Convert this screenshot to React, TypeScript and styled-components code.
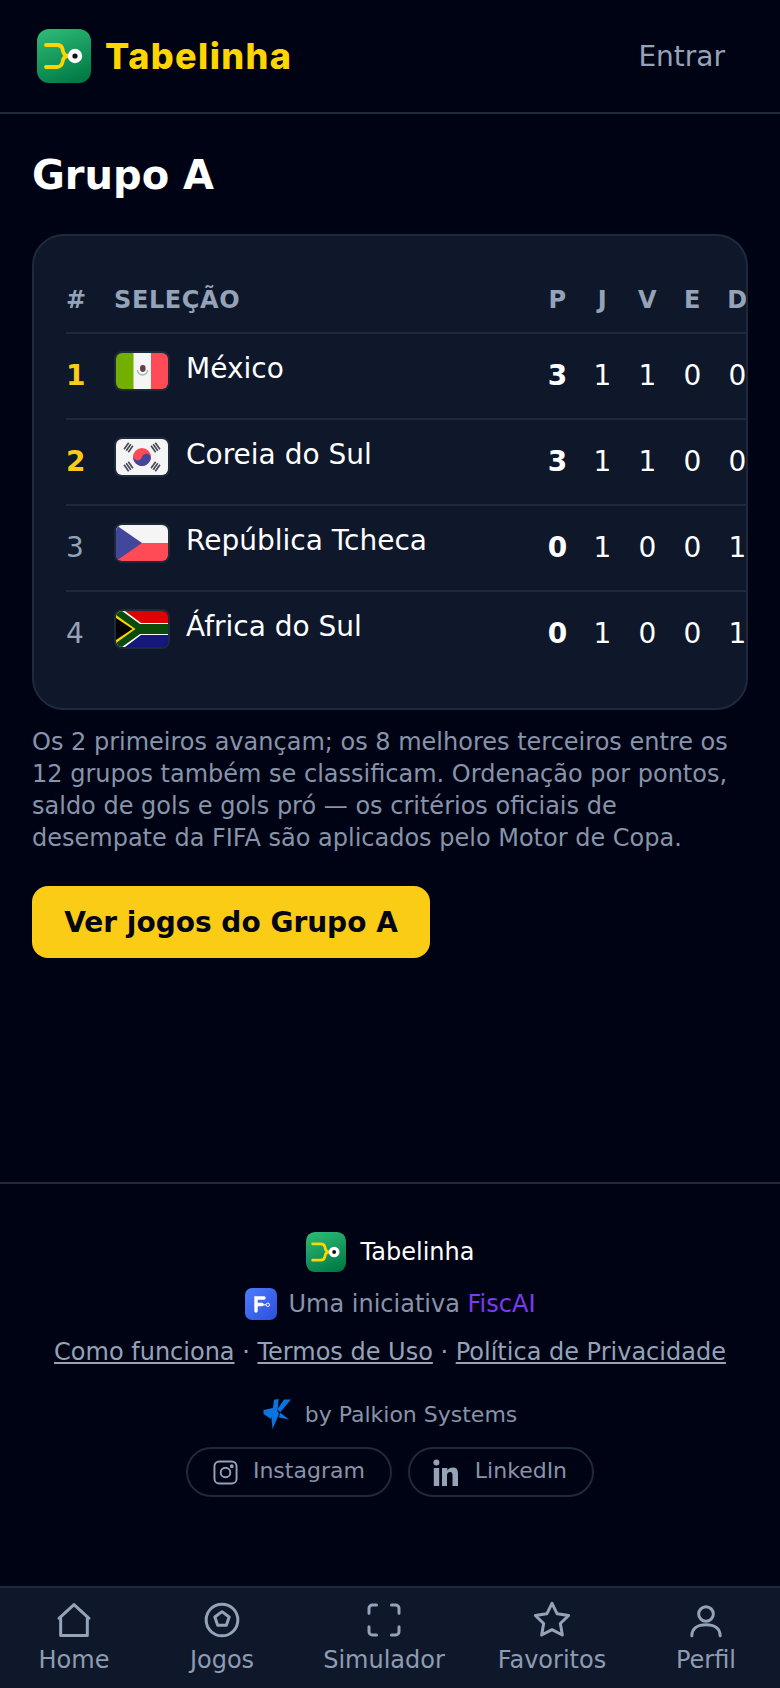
import React from 'react';
import styled, { createGlobalStyle } from 'styled-components';

interface Team {
  pos: number;
  name: string;
  flag: React.ReactNode;
  stats: number[];
}

const GlobalStyle = createGlobalStyle`
  html, body {
    margin: 0;
    padding: 0;
    background: #000314;
  }
  body {
    font-family: "DejaVu Sans", sans-serif;
    color: #fff;
  }
  * {
    box-sizing: border-box;
  }
`;

const Page = styled.div`
  display: flex;
  flex-direction: column;
  height: 1688px;
  overflow: hidden;
  background: #000314;
`;

const Header = styled.header`
  display: flex;
  align-items: center;
  justify-content: space-between;
  height: 114px;
  padding: 0 55px 0 37px;
  border-bottom: 2px solid #1e293b;
`;

const Brand = styled.div`
  display: flex;
  align-items: center;
  gap: 14px;
`;

const BrandName = styled.span`
  font-family: Inter, sans-serif;
  font-size: 36px;
  font-weight: 800;
  letter-spacing: 1.4px;
  color: #ffd500;
`;

const LoginLink = styled.a`
  font-size: 28px;
  color: #94a3b8;
`;

const Main = styled.main`
  flex: 1;
  padding: 37px 32px 0;
`;

const Title = styled.h1`
  margin: 0 0 35px;
  font-size: 40px;
  line-height: 48px;
  font-weight: 700;
`;

const Card = styled.section`
  height: 476px;
  padding: 32px 0 0 32px;
  background: #0f172a;
  border: 2px solid #1e293b;
  border-radius: 32px;
  overflow: hidden;
`;

const Table = styled.table`
  width: 694px;
  border-collapse: collapse;
  table-layout: fixed;
`;

const HeadCell = styled.th<{ $align?: string; $width?: number }>`
  width: ${(p) => (p.$width ? `${p.$width}px` : 'auto')};
  height: 65px;
  padding: 0 0 1px;
  text-align: ${(p) => p.$align || 'center'};
  font-size: 24px;
  font-weight: 700;
  letter-spacing: 0.6px;
  color: #94a3b8;
`;

const Row = styled.tr`
  border-top: 2px solid #1e293b;
`;

const PosCell = styled.td<{ $top: boolean }>`
  height: 86px;
  padding: 0 0 2px;
  font-size: 28px;
  font-weight: ${(p) => (p.$top ? 700 : 400)};
  color: ${(p) => (p.$top ? '#facc15' : '#94a3b8')};
`;

const TeamCell = styled.td`
  padding: 0;
`;

const TeamInfo = styled.div`
  display: flex;
  align-items: center;
  gap: 16px;
  margin-top: -11px;
  font-size: 28px;
`;

const TeamName = styled.span`
  margin-bottom: 5px;
`;

const FlagFrame = styled.span`
  display: flex;
  width: 56px;
  height: 40px;
  border: 2px solid #1e293b;
  border-radius: 8px;
  overflow: hidden;
`;

const StatCell = styled.td<{ $bold?: boolean }>`
  padding: 0 0 2px;
  text-align: center;
  font-size: 28px;
  font-weight: ${(p) => (p.$bold ? 700 : 400)};
`;

const Note = styled.p`
  margin: 16px 0 32px;
  font-size: 24px;
  line-height: 32px;
  color: #8794a9;
`;

const CtaButton = styled.button`
  display: block;
  width: 398px;
  height: 72px;
  padding: 0;
  border: none;
  border-radius: 16px;
  background: #facc15;
  color: #020617;
  font-family: inherit;
  font-size: 28px;
  font-weight: 700;
`;

const Footer = styled.footer`
  display: flex;
  flex-direction: column;
  align-items: center;
  height: 404px;
  padding-top: 48px;
  border-top: 2px solid #1e293b;
`;

const FooterBrand = styled.div`
  display: flex;
  align-items: center;
  gap: 15px;
  height: 40px;
  font-size: 24px;
`;

const Initiative = styled.div`
  display: flex;
  align-items: center;
  gap: 12px;
  height: 32px;
  margin-top: 16px;
  font-size: 24px;
  color: #8794a9;
`;

const FiscAi = styled.span`
  color: #7c3aed;
`;

const FooterLinks = styled.div`
  margin-top: 16px;
  font-size: 24px;
  line-height: 32px;
  color: #94a3b8;

  a {
    text-decoration: underline;
  }
`;

const Palkion = styled.div`
  display: flex;
  align-items: center;
  gap: 14px;
  height: 32px;
  margin-top: 30px;
  font-size: 22px;
  color: #8794a9;
`;

const Socials = styled.div`
  display: flex;
  gap: 16px;
  margin-top: 17px;
`;

const SocialLink = styled.a`
  display: flex;
  align-items: center;
  gap: 15px;
  height: 50px;
  padding: 0 25px;
  border: 2px solid #1e293b;
  border-radius: 25px;
  font-size: 22px;
  color: #8794a9;

  span {
    margin-bottom: 3px;
  }
`;

const LinkedInGlyph = styled.svg`
  margin: 0 2px 0 -2px;
`;

const BottomNav = styled.nav`
  display: grid;
  grid-template-columns: 148px 148px 176px 160px 148px;
  height: 102px;
  padding-top: 12px;
  background: #0f172a;
  border-top: 2px solid #1e293b;
`;

const NavItem = styled.a`
  display: flex;
  flex-direction: column;
  align-items: center;
  gap: 5px;
  font-size: 24px;
  line-height: 30px;
  color: #8e9cb2;
`;

const AppLogo: React.FC<{ size: number; id: string }> = ({ size, id }) => (
  <svg width={size} height={size} viewBox="0 0 54 54">
    <defs>
      <linearGradient id={id} x1="0.3" y1="0" x2="0.7" y2="1">
        <stop offset="0" stopColor="#2bb673" />
        <stop offset="1" stopColor="#007a45" />
      </linearGradient>
    </defs>
    <rect width="54" height="54" rx="12" fill={`url(#${id})`} />
    <path
      d="M9 16H20Q24.5 16 25.5 20Q26.5 27 31 27Q26.5 27 25.5 33Q24.5 38 20 38H9"
      fill="none"
      stroke="#ffd500"
      strokeWidth="3.8"
      strokeLinecap="round"
      strokeLinejoin="round"
    />
    <circle cx="38" cy="27" r="7.2" fill="#fff" />
    <circle cx="38" cy="27" r="2.6" fill="#111" />
  </svg>
);

const FiscLogo = () => (
  <svg width="32" height="32" viewBox="0 0 32 32">
    <defs>
      <linearGradient id="fisc" x1="0" y1="0" x2="1" y2="1">
        <stop offset="0" stopColor="#4f7cff" />
        <stop offset="1" stopColor="#2b4fd8" />
      </linearGradient>
    </defs>
    <rect width="32" height="32" rx="7" fill="url(#fisc)" />
    <path d="M11 23V10H19M11 16.5H17" fill="none" stroke="#fff" strokeWidth="3.4" strokeLinecap="round" />
    <path d="M17 16.8H21" stroke="#fff" strokeWidth="1" />
    <circle cx="22.8" cy="16.8" r="1.7" fill="none" stroke="#fff" strokeWidth="1" />
  </svg>
);

const PalkionLogo = () => (
  <svg width="28" height="30" viewBox="0 0 28 30" fill="#0b74de">
    <path d="M11 0.7L15.7 0L14.5 12L16 15L9.5 30L8.5 20Z" />
    <path d="M28 0.5H21L14.5 10L17 13.5Z" />
    <path d="M0.5 11L12 8.5L8 20L0.5 15Z" />
    <path d="M17 13.5L26 20.5L16 18.5Z" />
  </svg>
);

const InstagramIcon = () => (
  <svg width="25" height="25" viewBox="0 0 26 26" fill="none" stroke="#94a3b8" strokeWidth="2">
    <rect x="1.5" y="1.5" width="23" height="23" rx="5" />
    <circle cx="13" cy="13" r="5" />
    <circle cx="19.5" cy="6.5" r="1" fill="#94a3b8" />
  </svg>
);

const LinkedInIcon = () => (
  <LinkedInGlyph width="25" height="27" viewBox="0 0 25 27" fill="#94a3b8">
    <circle cx="3.4" cy="3.4" r="3" />
    <rect x="0.8" y="9" width="5.4" height="18" />
    <path d="M9 9H14.3V11.6C15.3 9.9 17.5 8.6 20 8.6C24 8.6 25 11.3 25 15.1V27H19.5V16.5C19.5 14.5 19 13.1 17.1 13.1C14.9 13.1 14 14.7 14 16.7V27H9Z" />
  </LinkedInGlyph>
);

const navIconProps = {
  width: 40,
  height: 40,
  viewBox: '0 0 24 24',
  fill: 'none',
  stroke: '#94a3b8',
  strokeWidth: 1.8,
  strokeLinecap: 'round' as const,
  strokeLinejoin: 'round' as const,
};

const HomeIcon = () => (
  <svg {...navIconProps}>
    <path d="M3 11L12 2.8L21 11H20V21.3H4V11Z" />
  </svg>
);

const BallIcon = () => (
  <svg {...navIconProps}>
    <circle cx="12" cy="12" r="9.5" />
    <path d="M12 7L16.3 10.2L14.6 15.2H9.4L7.7 10.2Z" />
  </svg>
);

const ScanIcon = () => (
  <svg {...navIconProps}>
    <path d="M3 8V5A2 2 0 0 1 5 3H7.5M16.5 3H19A2 2 0 0 1 21 5V8M21 16V19A2 2 0 0 1 19 21H16.5M7.5 21H5A2 2 0 0 1 3 19V16" />
  </svg>
);

const StarIcon = () => (
  <svg {...navIconProps}>
    <path d="M12 2L15.1 8.3L22 9.3L17 14.1L18.2 21L12 17.8L5.8 21L7 14.1L2 9.3L8.9 8.3Z" />
  </svg>
);

const UserIcon = () => (
  <svg {...navIconProps}>
    <circle cx="12" cy="8.4" r="4.4" />
    <path d="M3.5 21.5C3.5 17 7 14.8 12 14.8S20.5 17 20.5 21.5" />
  </svg>
);

const MexicoFlag = () => (
  <svg width="52" height="36" viewBox="0 0 52 36">
    <rect width="18" height="36" fill="#73af00" />
    <rect x="17.5" width="17.5" height="36" fill="#f5f5f5" />
    <rect x="35" width="17" height="36" fill="#ff4b55" />
    <path d="M21.5 17A5 5 0 0 0 31.5 17" fill="none" stroke="#8cc5a0" strokeWidth="1.4" />
    <ellipse cx="26.8" cy="15.5" rx="2.8" ry="3.4" fill="#6b3a4a" />
  </svg>
);

const Trigram: React.FC<{ x: number; y: number; angle: number }> = ({ x, y, angle }) => (
  <g transform={`translate(${x} ${y}) rotate(${angle})`} fill="#464655">
    <rect x="-4" y="-3.4" width="8" height="1.6" />
    <rect x="-4" y="-0.8" width="8" height="1.6" />
    <rect x="-4" y="1.8" width="8" height="1.6" />
  </g>
);

const KoreaFlag = () => (
  <svg width="52" height="36" viewBox="0 0 52 36">
    <rect width="52" height="36" fill="#f5f5f5" />
    <circle cx="26" cy="18" r="9" fill="#ff4b55" />
    <path
      d="M17 18A4.5 4.5 0 0 0 26 18A4.5 4.5 0 0 1 35 18A9 9 0 0 1 17 18Z"
      fill="#41479b"
      transform="rotate(15 26 18)"
    />
    <Trigram x={12.5} y={8.5} angle={-55} />
    <Trigram x={39.5} y={8.5} angle={55} />
    <Trigram x={12.5} y={27.5} angle={55} />
    <Trigram x={39.5} y={27.5} angle={-55} />
  </svg>
);

const CzechFlag = () => (
  <svg width="52" height="36" viewBox="0 0 52 36">
    <rect width="52" height="18" fill="#f5f5f5" />
    <rect y="18" width="52" height="18" fill="#ff4b55" />
    <path d="M0 0L26 18L0 36Z" fill="#41479b" />
  </svg>
);

const SouthAfricaFlag = () => (
  <svg width="52" height="36" viewBox="0 0 52 36">
    <rect width="52" height="18" fill="#e00000" />
    <rect y="18" width="52" height="18" fill="#16167f" />
    <path d="M0 0H9L25 12H52V24H25L9 36H0Z" fill="#fff" />
    <path d="M0 0H6L24 13H52V23H24L6 36H0Z" fill="#0a4a0a" />
    <path d="M0 4L19.5 18L0 32Z" fill="#ffd500" />
    <path d="M0 7L16.5 18L0 29Z" fill="#000" />
  </svg>
);

const teams: Team[] = [
  { pos: 1, name: 'México', flag: <MexicoFlag />, stats: [3, 1, 1, 0, 0] },
  { pos: 2, name: 'Coreia do Sul', flag: <KoreaFlag />, stats: [3, 1, 1, 0, 0] },
  { pos: 3, name: 'República Tcheca', flag: <CzechFlag />, stats: [0, 1, 0, 0, 1] },
  { pos: 4, name: 'África do Sul', flag: <SouthAfricaFlag />, stats: [0, 1, 0, 0, 1] },
];

const statColumns = ['P', 'J', 'V', 'E', 'D'];

const navItems = [
  { label: 'Home', icon: <HomeIcon /> },
  { label: 'Jogos', icon: <BallIcon /> },
  { label: 'Simulador', icon: <ScanIcon /> },
  { label: 'Favoritos', icon: <StarIcon /> },
  { label: 'Perfil', icon: <UserIcon /> },
];

const App: React.FC = () => (
  <Page>
    <GlobalStyle />
    <Header>
      <Brand>
        <AppLogo size={54} id="logo-top" />
        <BrandName>Tabelinha</BrandName>
      </Brand>
      <LoginLink>Entrar</LoginLink>
    </Header>
    <Main>
      <Title>Grupo A</Title>
      <Card>
        <Table>
          <thead>
            <tr>
              <HeadCell $align="left" $width={48}>#</HeadCell>
              <HeadCell $align="left">SELEÇÃO</HeadCell>
              {statColumns.map((c) => (
                <HeadCell key={c} $width={45}>{c}</HeadCell>
              ))}
            </tr>
          </thead>
          <tbody>
            {teams.map((team) => (
              <Row key={team.pos}>
                <PosCell $top={team.pos <= 2}>{team.pos}</PosCell>
                <TeamCell>
                  <TeamInfo>
                    <FlagFrame>{team.flag}</FlagFrame>
                    <TeamName>{team.name}</TeamName>
                  </TeamInfo>
                </TeamCell>
                {team.stats.map((s, i) => (
                  <StatCell key={statColumns[i]} $bold={i === 0}>{s}</StatCell>
                ))}
              </Row>
            ))}
          </tbody>
        </Table>
      </Card>
      <Note>
        Os 2 primeiros avançam; os 8 melhores terceiros entre os 12 grupos também se classificam.
        Ordenação por pontos, saldo de gols e gols pró — os critérios oficiais de desempate da FIFA
        são aplicados pelo Motor de Copa.
      </Note>
      <CtaButton>Ver jogos do Grupo A</CtaButton>
    </Main>
    <Footer>
      <FooterBrand>
        <AppLogo size={40} id="logo-footer" />
        Tabelinha
      </FooterBrand>
      <Initiative>
        <FiscLogo />
        <span>
          Uma iniciativa <FiscAi>FiscAI</FiscAi>
        </span>
      </Initiative>
      <FooterLinks>
        <a>Como funciona</a> · <a>Termos de Uso</a> · <a>Política de Privacidade</a>
      </FooterLinks>
      <Palkion>
        <PalkionLogo />
        by Palkion Systems
      </Palkion>
      <Socials>
        <SocialLink>
          <InstagramIcon />
          <span>Instagram</span>
        </SocialLink>
        <SocialLink>
          <LinkedInIcon />
          <span>LinkedIn</span>
        </SocialLink>
      </Socials>
    </Footer>
    <BottomNav>
      {navItems.map((item) => (
        <NavItem key={item.label}>
          {item.icon}
          {item.label}
        </NavItem>
      ))}
    </BottomNav>
  </Page>
);

export default App;
